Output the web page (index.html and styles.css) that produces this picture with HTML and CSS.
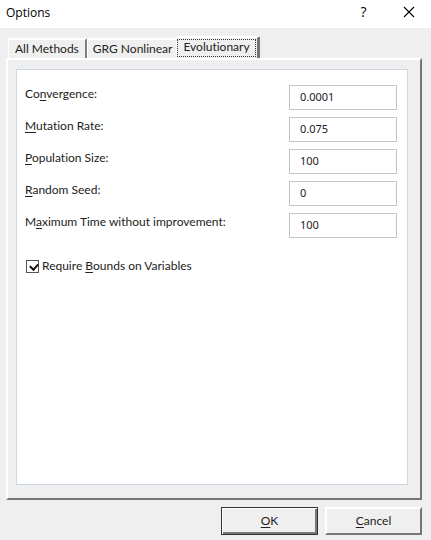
FILE: index.html
```html
<!DOCTYPE html>
<html lang="en">
<head>
<meta charset="utf-8">
<meta name="viewport" content="width=device-width, initial-scale=1">
<title>Options</title>
<link rel="stylesheet" href="styles.css">
</head>
<body>
<main class="dialog">
  <header class="titlebar">
    <h1 class="title">Options</h1>
    <button class="caption-button help" type="button" aria-label="Help">?</button>
    <button class="caption-button close" type="button" aria-label="Close">
      <svg width="12" height="12" viewBox="0 0 12 12" aria-hidden="true"><path d="M1 1 11 11M11 1 1 11" fill="none" stroke="#000" stroke-width="1.1"/></svg>
    </button>
  </header>
  <form class="content">
    <div class="tabs" role="tablist">
      <button class="tab" type="button" role="tab">All Methods</button>
      <button class="tab" type="button" role="tab">GRG Nonlinear</button>
      <button class="tab active" type="button" role="tab" aria-selected="true"><span class="focus">Evolutionary</span></button>
    </div>
    <section class="pane">
      <div class="panel">
        <div class="row"><label for="convergence">Co<u>n</u>vergence:</label><input class="field" id="convergence" type="text" value="0.0001"></div>
        <div class="row"><label for="mutation"><u>M</u>utation Rate:</label><input class="field" id="mutation" type="text" value="0.075"></div>
        <div class="row"><label for="population"><u>P</u>opulation Size:</label><input class="field" id="population" type="text" value="100"></div>
        <div class="row"><label for="seed"><u>R</u>andom Seed:</label><input class="field" id="seed" type="text" value="0"></div>
        <div class="row"><label for="time">M<u>a</u>ximum Time without improvement:</label><input class="field" id="time" type="text" value="100"></div>
        <div class="check-row"><input class="check" id="bounds" type="checkbox" checked><label for="bounds">Require <u>B</u>ounds on Variables</label></div>
      </div>
    </section>
    <footer class="actions">
      <button class="action default" type="button"><span><u>O</u>K</span></button>
      <button class="action" type="button"><span><u>C</u>ancel</span></button>
    </footer>
  </form>
</main>
</body>
</html>
```
FILE: styles.css
```css
* { box-sizing: border-box; }

body {
  margin: 0;
  background: #efefef;
  color: #222;
  font: 12px/16px Lato, "Liberation Sans", sans-serif;
  font-variant-ligatures: none;
}

button, input { font: inherit; font-variant-ligatures: none; color: inherit; }

u { text-underline-offset: 2px; text-decoration-thickness: 1px; text-decoration-skip-ink: none; }

.dialog {
  display: flex;
  flex-direction: column;
  min-height: 100vh;
}

.titlebar {
  display: flex;
  align-items: center;
  height: 28px;
  padding: 0 8px 4px 6px;
  background: #fff;
  color: #000;
  font-family: "Open Sans", sans-serif;
}

.title { flex: 1; margin: 0; padding-top: 2px; font: inherit; }

.caption-button {
  display: flex;
  align-items: center;
  justify-content: center;
  height: 24px;
  padding: 0;
  border: 0;
  background: none;
}

.help { width: 63px; font-size: 14px; }
.close { width: 28px; }

.content {
  display: flex;
  flex: 1;
  flex-direction: column;
  padding: 8px 9px 5px 6px;
}

.tabs {
  display: flex;
  align-items: flex-end;
  padding-left: 2px;
}

.tab {
  height: 20px;
  padding: 0 6px;
  border: solid #fff;
  border-width: 2px 2px 0 1px;
  border-right-color: #808080;
  border-radius: 2px 2px 0 0;
  background: #efefef;
  line-height: 18px;
  white-space: nowrap;
}

.tab:nth-child(2) { padding: 0 4px 0 5px; border-right: 0; }

.tab.active {
  height: 24px;
  margin-bottom: -2px;
  padding: 1px 1px 3px 0;
  border-right-width: 3px;
  border-right-color: #757575;
}

.focus {
  display: block;
  height: 18px;
  padding: 0 5px;
  border: 1px dotted #333;
  line-height: 14px;
}

.pane {
  display: flex;
  flex: 1;
  padding: 9px 12px 13px 8px;
  border: 2px solid #fff;
  border-right-color: #777;
  border-bottom-color: #777;
}

.panel {
  flex: 1;
  padding: 15px 10px 16px 8px;
  border: 1px solid #ccd8e4;
  background: #fff;
}

.row {
  display: flex;
  justify-content: space-between;
  height: 25px;
  margin-bottom: 7px;
}

.row label { padding-top: 1px; }

.field {
  width: 108px;
  height: 25px;
  padding: 0 10px 2px;
  border: 1px solid #c4c4c4;
  border-radius: 0;
  background: #fff;
  font-family: "Noto Sans", sans-serif;
  font-size: 11px;
}

.check-row {
  display: flex;
  align-items: center;
  gap: 3px;
  height: 16px;
  margin-top: 20px;
  padding-left: 1px;
}

.check {
  width: 13px;
  height: 13px;
  margin: 0;
  border: 1px solid #555;
  background: #fff;
  appearance: none;
}

.check:checked::before {
  content: "";
  display: block;
  width: 6px;
  height: 4px;
  margin: 2px 3px;
  border: solid #111;
  border-width: 0 0 2px 2px;
  transform: rotate(-48deg);
}

.actions {
  display: flex;
  justify-content: flex-end;
  gap: 7px;
  padding-top: 7px;
}

.action {
  width: 97px;
  height: 28px;
  padding: 0;
  border: 2px solid #fff;
  border-right-color: #777;
  border-bottom-color: #777;
  background: #efefef;
}

.action.default {
  border: 1px solid #333;
  box-shadow: inset 1px 1px #fff, inset -2px -2px #777;
}
```
